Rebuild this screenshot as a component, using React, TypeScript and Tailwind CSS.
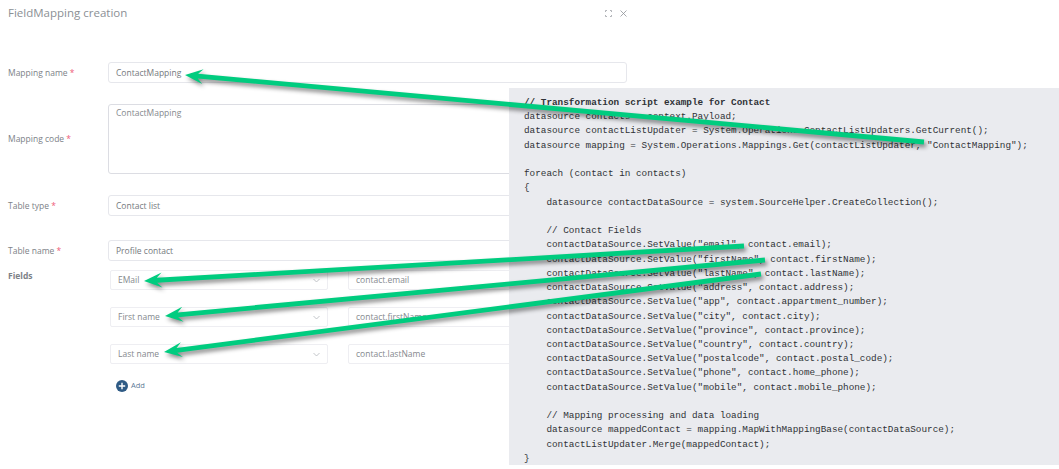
const code = [
  '// Transformation script example for Contact',
  'datasource contacts = context.Payload;',
  'datasource contactListUpdater = System.Operations.ContactListUpdaters.GetCurrent();',
  'datasource mapping = System.Operations.Mappings.Get(contactListUpdater, "ContactMapping");',
  '',
  'foreach (contact in contacts)',
  '{',
  '    datasource contactDataSource = system.SourceHelper.CreateCollection();',
  '',
  '    // Contact Fields',
  '    contactDataSource.SetValue("email", contact.email);',
  '    contactDataSource.SetValue("firstName", contact.firstName);',
  '    contactDataSource.SetValue("lastName", contact.lastName);',
  '    contactDataSource.SetValue("address", contact.address);',
  '    contactDataSource.SetValue("app", contact.appartment_number);',
  '    contactDataSource.SetValue("city", contact.city);',
  '    contactDataSource.SetValue("province", contact.province);',
  '    contactDataSource.SetValue("country", contact.country);',
  '    contactDataSource.SetValue("postalcode", contact.postal_code);',
  '    contactDataSource.SetValue("phone", contact.home_phone);',
  '    contactDataSource.SetValue("mobile", contact.mobile_phone);',
  '',
  '    // Mapping processing and data loading',
  '    datasource mappedContact = mapping.MapWithMappingBase(contactDataSource);',
  '    contactListUpdater.Merge(mappedContact);',
  '}',
];

function Label({ text, req = true }: { text: string; req?: boolean }) {
  return (
    <div className="w-[108px] shrink-0 pl-2 pt-px text-[8.5px] text-[#7d8287]">
      {text}
      {req && <span className="text-[#ee5a78]"> *</span>}
    </div>
  );
}

function Box({ text }: { text: string }) {
  return (
    <div className="flex h-[21px] flex-1 items-center rounded-[3px] border border-[#e6e7ec] bg-white px-[7px] pt-px text-[8.5px] text-[#75797e]">
      {text}
    </div>
  );
}

function Select({ text }: { text: string }) {
  return (
    <div className="flex h-5 w-[218px] items-center justify-between rounded-[2px] border border-[#eeeef2] bg-white pl-[7px] pr-[7px] text-[8.5px] text-[#85898e]">
      {text}
      <svg width="7" height="5" viewBox="0 0 7 5" fill="none" stroke="#b4b7bc" strokeWidth="0.8">
        <path d="M0.5 1 3.5 4 6.5 1" />
      </svg>
    </div>
  );
}

function FieldRow({ name, value }: { name: string; value: string }) {
  return (
    <div className="flex gap-5">
      <Select text={name} />
      <div className="flex h-5 w-[200px] items-center rounded-[2px] border border-[#eeeef2] bg-white pl-[7px] text-[8.5px] text-[#85898e]">
        {value}
      </div>
    </div>
  );
}

function Arrow({ tail, tip }: { tail: [number, number]; tip: [number, number] }) {
  const dx = tip[0] - tail[0];
  const dy = tip[1] - tail[1];
  const len = Math.hypot(dx, dy);
  const ux = dx / len;
  const uy = dy / len;
  const bx = tip[0] - ux * 18;
  const by = tip[1] - uy * 18;
  const nx = -uy;
  const ny = ux;
  const neck = [tip[0] - ux * 13, tip[1] - uy * 13];
  const pts = [
    [tail[0] + nx * 2.4, tail[1] + ny * 2.4],
    [neck[0] + nx * 2.4, neck[1] + ny * 2.4],
    [bx + nx * 7.5, by + ny * 7.5],
    tip,
    [bx - nx * 7.5, by - ny * 7.5],
    [neck[0] - nx * 2.4, neck[1] - ny * 2.4],
    [tail[0] - nx * 2.4, tail[1] - ny * 2.4],
  ]
    .map((p) => p.join(','))
    .join(' ');
  return <polygon points={pts} fill="#00cc7f" />;
}

export default function App() {
  return (
    <div className="relative h-[469px] w-[1059px] overflow-hidden bg-white font-['Open_Sans',sans-serif]">
      <div className="flex h-[26px] w-[635px] items-center justify-between pl-2 pr-2">
        <span className="text-[11.5px] text-[#8b9095]">FieldMapping creation</span>
        <div className="flex items-center gap-[8px]">
          <svg width="7" height="7" viewBox="0 0 7 7" fill="none" stroke="#9ea2a7" strokeWidth="0.8">
            <path d="M0.5 2V.5H2M5 .5H6.5V2M6.5 5V6.5H5M2 6.5H.5V5" />
          </svg>
          <svg width="7" height="7" viewBox="0 0 7 7" fill="none" stroke="#8f9398" strokeWidth="0.8">
            <path d="M.5.5 6.5 6.5M6.5.5 .5 6.5" />
          </svg>
        </div>
      </div>

      <div className="w-[627px] pt-[36px]">
        <div className="flex items-center">
          <Label text="Mapping name" />
          <Box text="ContactMapping" />
        </div>
        <div className="mt-[21px] flex items-center">
          <Label text="Mapping code" />
          <div className="h-[70px] flex-1 rounded-[3px] border border-[#dcdde3] bg-white px-[7px] py-[2px] text-[8.5px] text-[#85898e]">
            ContactMapping
          </div>
        </div>
        <div className="mt-[21px] flex items-center">
          <Label text="Table type" />
          <Box text="Contact list" />
        </div>
        <div className="mt-[24px] flex items-center">
          <Label text="Table name" />
          <Box text="Profile contact" />
        </div>
        <div className="mt-[9px] flex">
          <div className="w-[110px] shrink-0 pl-2 text-[8.5px] font-bold leading-[12px] text-[#7d8287]">Fields</div>
          <div className="flex flex-col gap-[17px]">
            <FieldRow name="EMail" value="contact.email" />
            <FieldRow name="First name" value="contact.firstName" />
            <FieldRow name="Last name" value="contact.lastName" />
            <div className="mt-[-1px] flex items-center gap-[3px] pl-[6px]">
              <svg width="12" height="12" viewBox="0 0 12 12">
                <circle cx="6" cy="6" r="6" fill="#2f5b85" />
                <path d="M6 2.8V9.2M2.8 6H9.2" stroke="#fff" strokeWidth="1.4" />
              </svg>
              <span className="text-[7.5px] text-[#5d7a96]">Add</span>
            </div>
          </div>
        </div>
      </div>

      <pre className="absolute left-[509px] top-[88px] h-[377px] w-[550px] bg-[#eaebef] pl-[15px] pt-[8px] font-['Liberation_Mono',monospace] text-[9.33px] leading-[14.24px] text-[#2f3236]">
        {code.map((line, i) => (
          <div key={i} className={i === 0 ? 'h-[14.24px] font-bold' : 'h-[14.24px]'}>
            {line}
          </div>
        ))}
      </pre>

      <svg className="absolute left-0 top-0 drop-shadow-[2px_3px_2px_rgba(0,0,0,0.45)]" width="1059" height="469">
        <Arrow tail={[924, 142]} tip={[185, 75]} />
        <Arrow tail={[744, 246]} tip={[144, 281]} />
        <Arrow tail={[765, 260]} tip={[165, 316]} />
        <Arrow tail={[761, 274]} tip={[164, 352]} />
      </svg>
    </div>
  );
}
